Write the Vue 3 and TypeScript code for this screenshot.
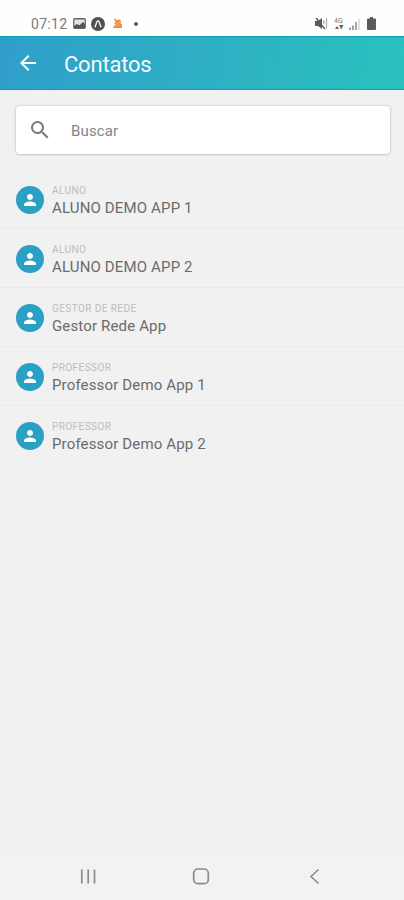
<script setup lang="ts">
interface Contact {
  role: string
  name: string
}

const contacts: Contact[] = [
  { role: 'ALUNO', name: 'ALUNO DEMO APP 1' },
  { role: 'ALUNO', name: 'ALUNO DEMO APP 2' },
  { role: 'GESTOR DE REDE', name: 'Gestor Rede App' },
  { role: 'PROFESSOR', name: 'Professor Demo App 1' },
  { role: 'PROFESSOR', name: 'Professor Demo App 2' },
]
</script>

<template>
  <div class="screen">
    <div class="status">
      <span class="clock">07:12</span>
      <svg class="picture" width="13" height="11" viewBox="0 0 13 11">
        <rect x=".75" y=".75" width="11.5" height="9.5" rx="1" fill="#e4e4e4" stroke="#666" stroke-width="1.3" />
        <path d="M1 10V8l3-2 2.500 1.300L10 4l2 2v4z" fill="#555" />
      </svg>
      <svg class="badge" width="14" height="14" viewBox="0 0 14 14">
        <circle cx="7" cy="7" r="7" fill="#505050" />
        <path d="M3.800 10.200C5 8.800 5.400 3.700 7 3.700s2 5.100 3.200 6.500" fill="none" stroke="#eee" stroke-width="1.400" />
      </svg>
      <svg class="flame" width="10" height="11" viewBox="0 0 10 11">
        <path d="M.5 0 4 2 7 1.500 8 3.500 7.500 5 9 7V10H.5V8L3 7 1 5.500 2.500 4z" fill="#f68b3f" />
        <path d="m3 5 4-.7M3 7.700l3.500-.7" stroke="#fbb98a" stroke-width=".7" />
      </svg>
      <span class="dot"></span>
      <span class="spacer"></span>
      <svg class="mute" width="13" height="13" viewBox="0 0 13 13">
        <path d="M0 4h3l4-3v11L3 9H0z" fill="#5b5b5b" />
        <path d="m1 1 9 11" stroke="#5b5b5b" stroke-width="1.300" />
        <path d="M8.800 3v4M11.500 1v10.500" stroke="#aaa" stroke-width="1.200" />
      </svg>
      <span class="network">
        <span class="gen">4G</span>
        <svg width="10" height="5" viewBox="0 0 10 5">
          <path d="M1 4h4L3 1zM5 0h4.500L7.200 4.500z" fill="#666" />
        </svg>
      </span>
      <svg class="signal" width="11" height="12" viewBox="0 0 11 12">
        <path d="M1 9.500V12M4 7.500V12" stroke="#888" stroke-width="1.600" />
        <path d="M7 4v8" stroke="#888" stroke-width="1.500" />
        <path d="M10 1v11" stroke="#d0d0d0" stroke-width="1.300" />
      </svg>
      <svg class="battery" width="9" height="13" viewBox="0 0 9 13">
        <path d="M3 0h3v1.500h2q1 0 1 1V12q0 1-1 1H1q-1 0-1-1V2.500q0-1 1-1h2z" fill="#5b5b5b" />
      </svg>
    </div>

    <header class="bar">
      <svg class="back" width="24" height="24" viewBox="0 0 24 24">
        <path d="M20 11H7.830l5.590-5.590L12 4l-8 8 8 8 1.410-1.410L7.830 13H20v-2z" fill="#fff" />
      </svg>
      <h1>Contatos</h1>
    </header>

    <main>
      <div class="search">
        <svg width="24" height="24" viewBox="0 0 24 24">
          <path d="M15.500 14h-.79l-.28-.27A6.471 6.471 0 0 0 16 9.500 6.500 6.500 0 1 0 9.500 16c1.610 0 3.090-.59 4.230-1.570l.27.28v.79l5 4.990L20.490 19l-4.990-5zm-6 0C7.010 14 5 11.990 5 9.500S7.010 5 9.500 5 14 7.010 14 9.500 11.990 14 9.500 14z" fill="#777" />
        </svg>
        <span>Buscar</span>
      </div>

      <ul>
        <li v-for="contact in contacts" :key="contact.name">
          <span class="avatar">
            <svg width="18" height="18" viewBox="0 0 24 24">
              <path d="M12 12c2.210 0 4-1.790 4-4s-1.790-4-4-4-4 1.790-4 4 1.790 4 4 4zm0 2c-2.670 0-8 1.340-8 4v2h16v-2c0-2.660-5.330-4-8-4z" fill="#fff" />
            </svg>
          </span>
          <span class="info">
            <span class="role">{{ contact.role }}</span>
            <span class="name">{{ contact.name }}</span>
          </span>
        </li>
      </ul>
    </main>

    <nav>
      <svg width="18" height="18" viewBox="0 0 18 18">
        <path d="M2.800 2.500v14M9.200 2.500v14M15.500 2.500v14" stroke="#8b8b8b" stroke-width="1.700" />
      </svg>
      <svg class="home" width="18" height="18" viewBox="0 0 18 18">
        <rect x="1.700" y="2" width="14.600" height="14.600" rx="4.200" fill="none" stroke="#8b8b8b" stroke-width="1.700" />
      </svg>
      <svg width="18" height="18" viewBox="0 0 18 18">
        <path d="M12.500 2.500 5 9.500l7.500 7" fill="none" stroke="#8b8b8b" stroke-width="1.600" />
      </svg>
    </nav>
  </div>
</template>

<style>
body {
  background: #f1f1f1;
}
</style>

<style scoped>
.screen {
  display: flex;
  flex-direction: column;
  width: 404px;
  height: 900px;
  background: #f1f1f1;
  font-family: Roboto, 'Liberation Sans', sans-serif;
  overflow: hidden;
}
.screen * {
  box-sizing: border-box;
}
svg {
  display: block;
  flex: none;
}
.status {
  display: flex;
  align-items: center;
  flex: none;
  height: 36px;
  padding: 11px 28px 0 31px;
  background: #fefefe;
}
.clock {
  width: 42px;
  color: #7a7a7a;
  font-size: 14px;
  line-height: 16px;
  letter-spacing: 0.3px;
}
.badge {
  margin-left: 5px;
}
.flame {
  margin-left: 8px;
}
.dot {
  width: 4px;
  height: 4px;
  margin-left: 11px;
  border-radius: 50%;
  background: #5b5b5b;
}
.spacer {
  flex: 1;
}
.network {
  display: flex;
  flex-direction: column;
  width: 10px;
  margin-left: 6px;
}
.gen {
  color: #777;
  font-size: 7px;
  line-height: 7px;
}
.signal {
  margin-left: 5px;
}
.battery {
  margin-left: 7px;
}
.bar {
  display: flex;
  align-items: center;
  flex: none;
  height: 54px;
  padding: 2px 16px 0;
  background: linear-gradient(100deg, #309fca 0%, #2eaec4 48%, #2ac2be 100%);
  box-shadow: inset 0 2px 1px -1px #0a9fb2, inset 0 -2px 1px -1px #0a9fb8;
}
.back {
  margin-top: -2px;
}
h1 {
  margin: 1px 0 0 24px;
  color: #f3fcff;
  font-size: 22px;
  font-weight: 400;
  line-height: 28px;
  letter-spacing: -0.2px;
}
main {
  flex: 1;
  padding-top: 16px;
}
.search {
  display: flex;
  align-items: center;
  height: 48px;
  margin: 0 14.5px 0 16px;
  padding-left: 12px;
  border-radius: 4px;
  background: #fff;
  box-shadow: 0 0 3px rgba(0, 0, 0, 0.2), 0 1px 2px rgba(0, 0, 0, 0.1);
}
.search span {
  margin: 1px 0 0 19px;
  color: #858585;
  font-size: 15px;
  line-height: 20px;
  letter-spacing: 0.15px;
}
ul {
  margin: 16px 0 0;
  padding: 0;
  list-style: none;
}
li {
  display: flex;
  align-items: center;
  height: 59px;
  padding: 1px 16px 0;
  border-bottom: 1px solid #e9e9e9;
}
li:last-child {
  border-bottom-color: transparent;
}
.avatar {
  display: flex;
  align-items: center;
  justify-content: center;
  width: 28px;
  height: 28px;
  border-radius: 50%;
  background: #2ba0c5;
}
.info {
  display: flex;
  flex-direction: column;
  margin-left: 8px;
  padding-top: 4px;
}
.role {
  color: #bcbcbc;
  font-size: 10px;
  line-height: 14px;
  letter-spacing: 0.42px;
}
.name {
  color: #6b6b6b;
  font-size: 15px;
  line-height: 21px;
  letter-spacing: 0.15px;
}
nav {
  display: flex;
  align-items: center;
  justify-content: space-between;
  flex: none;
  height: 48px;
  padding: 0 80px 0 79px;
  background: #f2f2f2;
}
.home {
  margin-right: 1px;
}
</style>
